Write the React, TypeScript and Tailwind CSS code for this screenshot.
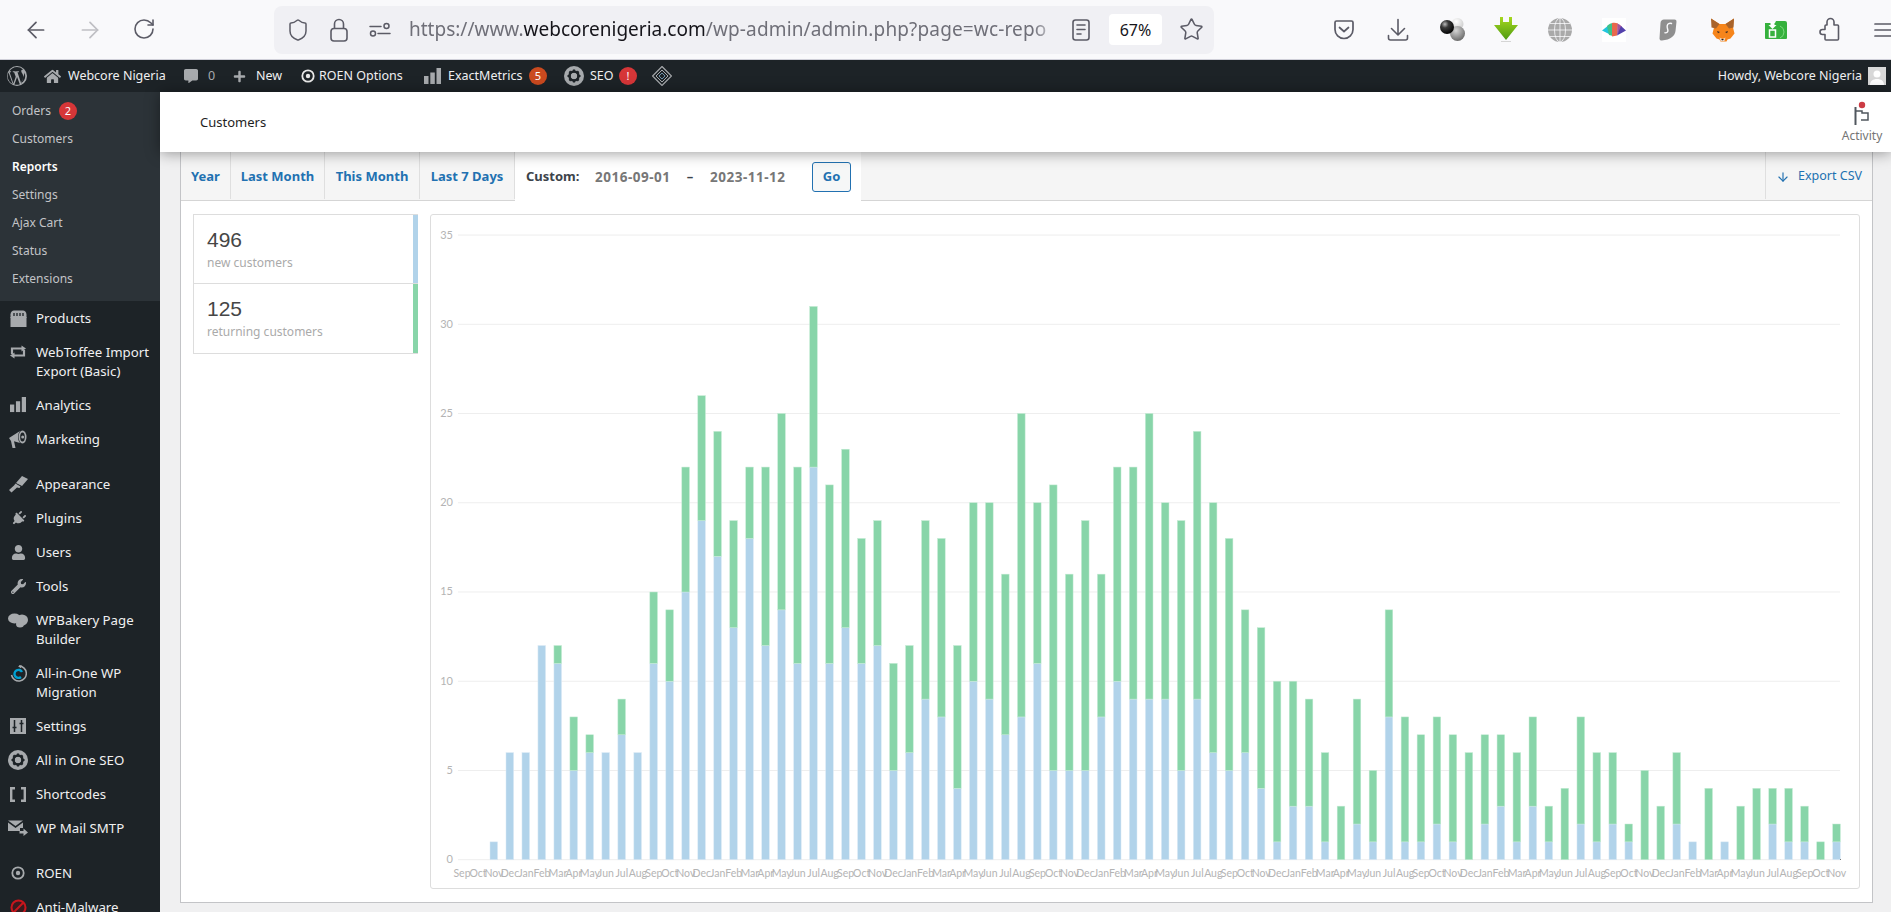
import { ArrowLeft, ArrowRight, RotateCw, Shield, Star, ArrowDown } from "lucide-react";
import { FaPlug, FaUser, FaWrench, FaHome, FaPlus, FaCommentAlt } from "react-icons/fa";
import type { ReactNode } from "react";

const series: [number, number][] = [
  [0, 0], [0, 0], [1, 1], [6, 6], [6, 6], [12, 12], [11, 12], [5, 8], [6, 7], [6, 6], [7, 9], [6, 6],
  [11, 15], [10, 14], [15, 22], [19, 26], [17, 24], [13, 19], [18, 22], [12, 22], [14, 25], [11, 22],
  [22, 31], [11, 21], [13, 23], [11, 18], [12, 19], [5, 11], [6, 12], [9, 19], [8, 18], [4, 12], [10, 20],
  [9, 20], [7, 16], [8, 25], [11, 20], [5, 21], [5, 16], [5, 19], [8, 16], [10, 22], [9, 22], [9, 25],
  [9, 20], [5, 19], [9, 24], [6, 20], [5, 18], [6, 14], [4, 13], [1, 10], [3, 10], [3, 9], [1, 6], [0, 3],
  [2, 9], [1, 5], [8, 14], [1, 8], [1, 7], [2, 8], [1, 7], [0, 6], [2, 7], [3, 7], [1, 6], [3, 8], [1, 3],
  [0, 4], [2, 8], [1, 6], [2, 6], [1, 2], [0, 5], [0, 3], [2, 6], [1, 1], [0, 4], [1, 1], [0, 3], [0, 4],
  [2, 4], [1, 4], [1, 3], [0, 1], [1, 2],
];
const months = ["Sep", "Oct", "Nov", "Dec", "Jan", "Feb", "Mar", "Apr", "May", "Jun", "Jul", "Aug"];

const Y0 = 859.7;
const UNIT = 17.847;

function Chart() {
  return (
    <svg viewBox="431 215 1428 673" className="block w-full h-full font-['Lato','Noto_Sans',sans-serif]">
      {[0, 5, 10, 15, 20, 25, 30, 35].map((v) => (
        <g key={v}>
          <rect x="458" y={Y0 - v * UNIT - 0.5} width="1382" height="1" fill="#eeeeee" />
          <text x="453" y={Y0 - v * UNIT + 3.5} textAnchor="end" fontSize="11" fill="#b4b4b4">
            {v}
          </text>
        </g>
      ))}
      {series.map(([fresh, total], i) => {
        const x = 490 + (i - 2) * 15.985;
        return (
          <g key={i}>
            {fresh > 0 && (
              <rect x={x} y={Y0 - fresh * UNIT} width="7.6" height={fresh * UNIT} fill="#b1d3ea" stroke="#dbeaf5" strokeWidth="0.5" />
            )}
            {total > fresh && (
              <rect x={x} y={Y0 - total * UNIT} width="7.6" height={(total - fresh) * UNIT} fill="#88d5a9" stroke="#c4ebd4" strokeWidth="0.5" />
            )}
            <text x={462 + i * 15.985} y="876.5" textAnchor="middle" fontSize="10.5" fill="#b4b4b4">
              {months[i % 12]}
            </text>
          </g>
        );
      })}
      <rect x="1840" y="859" width="1" height="1" fill="#777777" />
    </svg>
  );
}

/* ---- browser toolbar icons ---- */

function LockIcon() {
  return (
    <svg width="18" height="24" viewBox="0 0 18 24" fill="none" stroke="#5b5b66" strokeWidth="1.6">
      <rect x="1" y="10.500" width="16" height="12.500" rx="3" />
      <path d="M4.500 10.500V6a4.500 4.500 0 0 1 9 0v4.500" />
    </svg>
  );
}

function Permissions() {
  return (
    <svg width="22" height="22" viewBox="0 0 22 22" fill="none" stroke="#5b5b66" strokeWidth="1.5" strokeLinecap="round">
      <path d="M1 7.500h11" />
      <circle cx="17.500" cy="7" r="2.500" />
      <circle cx="4" cy="14.500" r="2.500" />
      <path d="M9 14.500h12" />
    </svg>
  );
}

function Reader() {
  return (
    <svg width="20" height="22" viewBox="0 0 20 22" fill="none" stroke="#5b5b66" strokeWidth="1.6" strokeLinecap="round">
      <rect x="2" y="1" width="16" height="20" rx="2.500" />
      <path d="M6 6h8M6 10.500h8M6 15h4" />
    </svg>
  );
}

function Pocket() {
  return (
    <svg width="22" height="22" viewBox="0 0 22 22" fill="none" stroke="#5b5b66" strokeWidth="1.7" strokeLinecap="round" strokeLinejoin="round">
      <path d="M2 3.500a1.500 1.500 0 0 1 1.500-1.500h15a1.500 1.500 0 0 1 1.500 1.500v7a9 9 0 0 1-18 0z" />
      <path d="M6.500 8.500l4.500 4 4.500-4" />
    </svg>
  );
}

function Download() {
  return (
    <svg width="22" height="24" viewBox="0 0 22 24" fill="none" stroke="#5b5b66" strokeWidth="1.6" strokeLinecap="round" strokeLinejoin="round">
      <path d="M11 1.500v15M4.500 10.500l6.500 6.500 6.500-6.500" />
      <path d="M1.500 17.500v2.500a2 2 0 0 0 2 2h15a2 2 0 0 0 2-2v-2.500" />
    </svg>
  );
}

function Balls() {
  return (
    <svg width="25" height="23" viewBox="0 0 25 23">
      <defs>
        <radialGradient id="ballA" cx="0.35" cy="0.3" r="0.75">
          <stop offset="0" stopColor="#bbbbbb" />
          <stop offset="0.35" stopColor="#3a3a3a" />
          <stop offset="1" stopColor="#000000" />
        </radialGradient>
        <radialGradient id="ballB" cx="0.4" cy="0.3" r="0.8">
          <stop offset="0" stopColor="#d5d5d5" />
          <stop offset="1" stopColor="#5d5d5d" />
        </radialGradient>
        <radialGradient id="ballC" cx="0.4" cy="0.3" r="0.8">
          <stop offset="0" stopColor="#ffffff" />
          <stop offset="1" stopColor="#c5c5c5" />
        </radialGradient>
      </defs>
      <circle cx="17.500" cy="6" r="6" fill="url(#ballC)" />
      <circle cx="17.500" cy="15.500" r="7.500" fill="url(#ballB)" />
      <circle cx="7" cy="9" r="7" fill="url(#ballA)" />
    </svg>
  );
}

function GreenArrow() {
  return (
    <svg width="26" height="26" viewBox="0 0 26 26">
      <defs>
        <linearGradient id="greenArrow" x1="0" y1="0" x2="0" y2="1">
          <stop offset="0" stopColor="#a6d81e" />
          <stop offset="1" stopColor="#4e9a12" />
        </linearGradient>
      </defs>
      <path d="M7 0h3v5h6V0h3v8h6L13 23 1 8h6z" fill="url(#greenArrow)" />
      <rect x="8" y="24" width="10" height="1" fill="#d5d5d5" />
    </svg>
  );
}

function Globe() {
  return (
    <svg width="24" height="24" viewBox="0 0 24 24" fill="none" stroke="#f9f9fb" strokeWidth="0.8">
      <circle cx="12" cy="12" r="12" fill="#a9a9a9" stroke="none" />
      <ellipse cx="12" cy="12" rx="5.500" ry="12" />
      <path d="M12 0v24M0 12h24M2 5.500h20M2 18.500h20" />
    </svg>
  );
}

function Rainbow() {
  return (
    <svg width="24" height="24" viewBox="0 0 24 24">
      <rect width="24" height="24" fill="#ffffff" />
      <path d="M0 12.500l7-5.500 2 10z" fill="#22c6de" />
      <path d="M5 8c2-2 4-2.800 6-3v13l-4-1z" fill="#3fc28a" />
      <path d="M10 5c2-.5 4-.3 6 .5l-1 12-5 1z" fill="#e8684c" />
      <path d="M15.500 5.500c2 .8 3.500 2 4.500 3.500l-5 8.500z" fill="#a6559a" />
      <path d="M19 8l5 4.500-9 5z" fill="#5340ac" />
    </svg>
  );
}

function Surfshark() {
  return (
    <svg width="18" height="22" viewBox="0 0 18 22">
      <path d="M5 0.500h10.500a2 2 0 0 1 2 2.200l-1 9.300c-.6 5-5 8.800-13.500 9.500-1.500.1-2.500-.6-2.500-2L1.500 4c.2-2 1.500-3.500 3.500-3.500z" fill="#8f8f8f" />
      <path d="M12.500 4.500c-2-.5-4 0-4.300 2.300-.3 2 .6 3 .7 4.700.1 1.500-1 2.500-2.900 2.300" fill="none" stroke="#f9f9fb" strokeWidth="1.400" strokeLinecap="round" />
    </svg>
  );
}

function Fox() {
  return (
    <svg width="25" height="24" viewBox="0 0 24 24">
      <path d="M0.500 0.500l8.500 5.500h6l8.500-5.500-1 9 1.500 6-4 5-3 1-1 2h-6l-1-2-3-1-4-5 1.500-6z" fill="#f6851b" />
      <path d="M0.500 0.500l8.500 5.500-3.500 4.500-4.500-1zM23.500 0.500l-8.500 5.500 3.500 4.500 4.500-1z" fill="#a9632a" />
      <path d="M9 19.500l1 3.500h4l1-3.500-3 1.500z" fill="#e8d6c8" />
      <path d="M10.500 21h3l-1.500 1.500z" fill="#222222" />
      <path d="M6.500 13l3 1-2 1.200zM17.500 13l-3 1 2 1.200z" fill="#3b2c25" />
    </svg>
  );
}

function GreenFolder() {
  return (
    <svg width="24" height="20" viewBox="0 0 24 20">
      <path d="M1 3h10l1-2h9a2 2 0 0 1 2 2v15a1 1 0 0 1-1 1H2a1 1 0 0 1-1-1z" fill="#36b13d" />
      <path d="M16 6a6.500 6.500 0 0 1 0 12" fill="none" stroke="#7ed97f" strokeWidth="1" />
      <path d="M6.500 2h4v3h2l-4 4-4-4h2z" fill="#ffffff" />
      <rect x="5.500" y="10" width="6" height="7" fill="none" stroke="#ffffff" strokeWidth="1.500" />
    </svg>
  );
}

function PuzzleIcon() {
  return (
    <svg width="24" height="25" viewBox="0 0 24 25" fill="none" stroke="#5b5b66" strokeWidth="1.600" strokeLinejoin="round">
      <path d="M9 8V5a3.500 3.500 0 0 1 7 0v3h3.500a1 1 0 0 1 1 1v13a1 1 0 0 1-1 1H8a1 1 0 0 1-1-1v-4.500H4.500a2.500 2.500 0 0 1 0-5H7V9a1 1 0 0 1 1-1z" />
    </svg>
  );
}

function Hamburger() {
  return (
    <svg width="20" height="18" viewBox="0 0 20 18" fill="none" stroke="#5b5b66" strokeWidth="1.700" strokeLinecap="round">
      <path d="M1 3h18M1 9h18M1 15h18" />
    </svg>
  );
}

/* ---- wp icons ---- */

function WpLogo() {
  return (
    <svg width="20" height="20" viewBox="0 0 20 20" fill="#a7aaad">
      <path d="M10 0a10 10 0 1 0 0 20 10 10 0 0 0 0-20zm0 1a9 9 0 0 1 6.100 2.400c-1-.1-1.900.7-1.900 1.700 0 .9.500 1.600 1.100 2.500.4.700.9 1.600.9 3 0 .9-.3 2-.8 3.500l-1.100 3.600-3.800-11.400c.6 0 1.200-.1 1.200-.1.600-.1.500-.9-.1-.9 0 0-1.700.1-2.800.1-1 0-2.700-.1-2.700-.1-.6 0-.6.900-.1.900 0 0 .5.1 1.100.1l1.600 4.500-2.300 6.800-3.800-11.300c.6 0 1.200-.1 1.200-.1.600-.1.500-.9-.1-.9 0 0-1.700.1-2.800.1H2.400A9 9 0 0 1 10 1zM1.500 6.400l4.300 11.800A9 9 0 0 1 1.500 6.400zm8.600 4.500l2.700 7.300.1.100a9 9 0 0 1-5.500.2zm7.500-4.100a9 9 0 0 1-3.400 10.300l2.700-7.900c.5-1.300.7-2.300.7-3.200 0-.4 0-.8 0-1.200z" />
    </svg>
  );
}

function SeoGear({ size }: { size: number }) {
  return (
    <svg width={size} height={size} viewBox="0 0 20 20">
      <circle cx="10" cy="10" r="10" fill="#a7aaad" />
      <circle cx="10" cy="10" r="4.500" fill="none" stroke="#1d2327" strokeWidth="2.600" />
      <path d="M10 3.500v3M10 13.500v3M3.500 10h3M13.500 10h3M5.400 5.400l2.100 2.100M12.500 12.500l2.100 2.100M14.600 5.400l-2.100 2.100M7.500 12.500l-2.100 2.100" stroke="#1d2327" strokeWidth="2.200" />
    </svg>
  );
}

function Bars({ size }: { size: number }) {
  return (
    <svg width={size} height={size} viewBox="0 0 17 17" fill="#a7aaad">
      <rect x="0" y="8" width="4.500" height="8" />
      <rect x="6.300" y="4.500" width="4.500" height="11.500" />
      <rect x="12.500" y="0" width="4.500" height="16" />
    </svg>
  );
}

function Diamond() {
  return (
    <svg width="20" height="20" viewBox="0 0 20 20" fill="none" stroke="#a7aaad">
      <path d="M10 0.500L19.500 10 10 19.500 0.500 10z" strokeWidth="1.200" />
      <path d="M10 4l6 6-6 6-6-6z" strokeWidth="1" />
      <path d="M10 7l3 3-3 3-3-3z" strokeWidth="1" stroke="#6b8fa8" />
    </svg>
  );
}

function ProductsIcon() {
  return (
    <svg width="17" height="17" viewBox="0 0 17 17" fill="#a7aaad">
      <path d="M0.500 8V4.500C0.500 2 2.500 0.500 4 0.500h9c1.500 0 3.500 1.500 3.500 4V8z" />
      <rect x="0.500" y="7" width="16" height="10" />
      <path d="M4 3v3M7 3v3M10 3v3M13 3v3" stroke="#1d2327" strokeWidth="1.300" />
    </svg>
  );
}

function RepeatIcon() {
  return (
    <svg width="16" height="14" viewBox="0 0 16 14" fill="#a7aaad">
      <path d="M2 9V3.500h10.500M14 5v5.500H4" fill="none" stroke="#a7aaad" strokeWidth="2.200" />
      <path d="M11.500 0.500L16 3.500l-4.500 3zM4.500 7.500L0 10.500l4.500 3z" />
    </svg>
  );
}

function Megaphone() {
  return (
    <svg width="18" height="19" viewBox="0 0 18 19" fill="#a7aaad">
      <path d="M0 8l11-7c-1.500 2-2 4-2 6s.5 4 2 6L5 11.300 6.500 18H3.500L2 11z" />
      <ellipse cx="13.500" cy="7" rx="4" ry="6.500" />
      <ellipse cx="13.500" cy="7" rx="2.300" ry="4.500" fill="#1d2327" />
      <circle cx="13.700" cy="7" r="1.500" />
    </svg>
  );
}

function Brush() {
  return (
    <svg width="19" height="17" viewBox="0 0 19 17" fill="#a7aaad">
      <path d="M7 7l6-7 6 3-6 7z" />
      <path d="M6.500 7.500l5 3-1 1.500-2.500-.5L2.500 16.500 0 14l5-4.500z" />
    </svg>
  );
}

function Bakery() {
  return (
    <svg width="20" height="16" viewBox="0 0 20 16" fill="#a7aaad">
      <ellipse cx="6.500" cy="6.500" rx="6.500" ry="5" />
      <ellipse cx="14" cy="8" rx="6" ry="5.500" />
      <ellipse cx="12" cy="12" rx="4" ry="3.500" />
    </svg>
  );
}

function MigrationIcon() {
  return (
    <svg width="17" height="19" viewBox="0 0 17 19" fill="none">
      <path d="M9 2a7.500 7.500 0 1 1-7.500 9" stroke="#a7aaad" strokeWidth="1.500" />
      <path d="M11.500 1L8 2.300l3 2z" fill="#a7aaad" />
      <path d="M12 8a4 4 0 1 0-1 5" stroke="#00a0d2" strokeWidth="2.400" />
    </svg>
  );
}

function SettingsIcon() {
  return (
    <svg width="16" height="16" viewBox="0 0 16 16">
      <rect width="16" height="16" fill="#a7aaad" />
      <path d="M4.500 2v12M11.500 2v12M2.500 9.500h4M9.500 5.500h4" stroke="#1d2327" strokeWidth="1.500" />
    </svg>
  );
}

function Brackets() {
  return (
    <svg width="16" height="15" viewBox="0 0 16 15" fill="none" stroke="#a7aaad" strokeWidth="2.400">
      <path d="M5 1.200H1.200v12.600H5M11 1.200h3.800v12.600H11" />
    </svg>
  );
}

function MailIcon() {
  return (
    <svg width="20" height="16" viewBox="0 0 20 16" fill="#a7aaad">
      <path d="M0 0.500h15L7.500 6zM0 2.500l7.500 5.500L15 2.500v5.500h-3v3H0z" />
      <path d="M11.500 11h4V8.500l4.500 4-4.500 3.500v-2.500h-4z" />
    </svg>
  );
}

function TargetIcon({ size, color }: { size: number; color: string }) {
  return (
    <svg width={size} height={size} viewBox="0 0 14 14" fill="none">
      <circle cx="7" cy="7" r="5.700" stroke={color} strokeWidth="1.800" />
      <circle cx="7" cy="7" r="2.200" fill={color} />
    </svg>
  );
}

function MalwareIcon() {
  return (
    <svg width="17" height="17" viewBox="0 0 17 17" fill="none">
      <circle cx="8.500" cy="8.500" r="8" fill="#3a1b1f" />
      <circle cx="8.500" cy="8.500" r="7" stroke="#c8161d" strokeWidth="2" />
      <path d="M3.500 13.500l10-10" stroke="#c8161d" strokeWidth="2" />
    </svg>
  );
}

function Flag() {
  return (
    <svg width="18" height="24" viewBox="0 0 18 24" fill="none">
      <path d="M2.500 6v18" stroke="#50575e" strokeWidth="2" />
      <path d="M3 10h6v2h6v7H8" stroke="#50575e" strokeWidth="1.500" />
      <circle cx="9" cy="4" r="3.200" fill="#cc3b44" />
    </svg>
  );
}

const submenu = [
  { label: "Orders", count: "2" },
  { label: "Customers" },
  { label: "Reports", current: true },
  { label: "Settings" },
  { label: "Ajax Cart" },
  { label: "Status" },
  { label: "Extensions" },
];

type MenuEntry = { icon: ReactNode; lines: string[]; spaced?: boolean };

const menu: MenuEntry[] = [
  { icon: <ProductsIcon />, lines: ["Products"] },
  { icon: <RepeatIcon />, lines: ["WebToffee Import", "Export (Basic)"] },
  { icon: <Bars size={16} />, lines: ["Analytics"] },
  { icon: <Megaphone />, lines: ["Marketing"] },
  { icon: <Brush />, lines: ["Appearance"], spaced: true },
  { icon: <FaPlug size={15} color="#a7aaad" className="rotate-45" />, lines: ["Plugins"] },
  { icon: <FaUser size={15} color="#a7aaad" />, lines: ["Users"] },
  { icon: <FaWrench size={15} color="#a7aaad" />, lines: ["Tools"] },
  { icon: <Bakery />, lines: ["WPBakery Page", "Builder"] },
  { icon: <MigrationIcon />, lines: ["All-in-One WP", "Migration"] },
  { icon: <SettingsIcon />, lines: ["Settings"] },
  { icon: <SeoGear size={20} />, lines: ["All in One SEO"] },
  { icon: <Brackets />, lines: ["Shortcodes"] },
  { icon: <MailIcon />, lines: ["WP Mail SMTP"] },
  { icon: <TargetIcon size={14} color="#a7aaad" />, lines: ["ROEN"], spaced: true },
  { icon: <MalwareIcon />, lines: ["Anti-Malware"] },
];

function Sidebar() {
  return (
    <aside className="w-[160px] shrink-0 bg-[#1d2327]">
      <ul className="bg-[#2c3338] pt-[5px] pb-[7px] h-[209px]">
        {submenu.map((s) => (
          <li
            key={s.label}
            className={`h-7 pl-3 flex items-center text-[12px] ${s.current ? "text-white font-semibold" : "text-[#c3c4c7]"}`}
          >
            {s.label}
            {s.count && (
              <span className="ml-2 w-[18px] h-[18px] rounded-full bg-[#d63638] text-white text-[11px] flex items-center justify-center">
                {s.count}
              </span>
            )}
          </li>
        ))}
      </ul>
      <ul>
        {menu.map((m) => (
          <li
            key={m.lines[0]}
            className={`flex text-[13.250px] leading-[19px] text-[#f0f0f1] ${m.spaced ? "mt-[11px]" : ""}`}
          >
            <span className="w-[36px] h-[34px] shrink-0 flex items-center justify-center">{m.icon}</span>
            <span className="py-[7.500px] whitespace-nowrap">
              {m.lines.map((l) => (
                <span key={l} className="block">
                  {l}
                </span>
              ))}
            </span>
          </li>
        ))}
      </ul>
    </aside>
  );
}

function AdminBar() {
  return (
    <header className="h-8 bg-[#1d2327] flex items-center text-[12.500px] text-[#f0f0f1] shrink-0">
      <span className="w-[34px] flex justify-center"><WpLogo /></span>
      <span className="w-[36px] flex justify-center"><FaHome size={17} color="#a7aaad" /></span>
      <span className="w-[100px] whitespace-nowrap -ml-[2px]">Webcore Nigeria</span>
      <span className="w-[16px] ml-[15px] flex justify-center"><FaCommentAlt size={14} color="#a7aaad" /></span>
      <span className="ml-[9px] text-[#a7aaad] w-[24px]">0</span>
      <span className="w-[16px] flex justify-center -ml-[1px]"><FaPlus size={13} color="#a7aaad" /></span>
      <span className="ml-[9px] w-[30px]">New</span>
      <span className="ml-[15px] w-[14px] flex justify-center"><TargetIcon size={14} color="#e8e8e8" /></span>
      <span className="ml-[4px] w-[90px] whitespace-nowrap">ROEN Options</span>
      <span className="ml-[15px] w-[17px]"><Bars size={17} /></span>
      <span className="ml-[7px] w-[75px] whitespace-nowrap">ExactMetrics</span>
      <span className="ml-[6px] w-[18px] h-[18px] rounded-full bg-[#ca4a1f] text-white text-[11px] flex items-center justify-center">5</span>
      <span className="ml-[17px]"><SeoGear size={20} /></span>
      <span className="ml-[6px] w-[24px]">SEO</span>
      <span className="ml-[5px] w-[18px] h-[18px] rounded-full bg-[#d63638] text-white text-[11px] flex items-center justify-center">!</span>
      <span className="ml-[15px]"><Diamond /></span>
      <span className="ml-auto whitespace-nowrap">Howdy, Webcore Nigeria</span>
      <span className="ml-[6px] mr-[5px] w-[18px] h-[18px] bg-[#d8d8d8] flex items-end justify-center overflow-hidden">
        <svg width="14" height="16" viewBox="0 0 14 16" fill="#ffffff">
          <circle cx="7" cy="5" r="3.500" />
          <path d="M0 16c0-4 3-6 7-6s7 2 7 6z" />
        </svg>
      </span>
    </header>
  );
}

function BrowserBar() {
  const right = [<Pocket key="a" />, <Download key="b" />, <Balls key="c" />, <GreenArrow key="d" />, <Globe key="e" />, <Rainbow key="f" />, <Surfshark key="g" />, <Fox key="h" />, <GreenFolder key="i" />, <PuzzleIcon key="j" />, <Hamburger key="k" />];
  return (
    <nav className="h-[60px] shrink-0 bg-[#f9f9fb] border-b border-[#cfcfd8] flex items-center pl-[18px] overflow-hidden">
      <div className="flex gap-[18px]">
        <span className="w-[36px] flex justify-center"><ArrowLeft size={26} color="#5b5b66" strokeWidth={1.6} /></span>
        <span className="w-[36px] flex justify-center"><ArrowRight size={26} color="#bfbfc4" strokeWidth={1.6} /></span>
        <span className="w-[36px] flex justify-center"><RotateCw size={24} color="#5b5b66" strokeWidth={1.6} /></span>
      </div>
      <div className="ml-[112px] w-[940px] h-12 rounded-lg bg-[#f0f0f4] flex items-center pl-[12px] pr-[10px] shrink-0">
        <Shield size={24} color="#5b5b66" strokeWidth={1.5} />
        <span className="ml-[20px]"><LockIcon /></span>
        <span className="ml-[21px]"><Permissions /></span>
        <span className="ml-[18px] w-[650px] shrink-0 overflow-hidden whitespace-nowrap text-[19px] text-[#6f6f78] [mask-image:linear-gradient(to_right,black_96%,transparent)]">
          https://www.<span className="text-[#15141a]">webcorenigeria.com</span>
          <span className="tracking-[0.15px]">/wp-admin/admin.php?page=wc-repo</span>
        </span>
        <span className="ml-[12px]"><Reader /></span>
        <span className="ml-[18px] w-[53px] h-[31px] rounded bg-white flex items-center justify-center text-[16px] text-[#15141a]">67%</span>
        <span className="ml-[17px]"><Star size={25} color="#5b5b66" strokeWidth={1.5} /></span>
      </div>
      <div className="ml-[103px] flex shrink-0">
        {right.map((icon, i) => (
          <span key={i} className="w-[54px] flex justify-center items-center">{icon}</span>
        ))}
      </div>
    </nav>
  );
}

function ReportTabs() {
  return (
    <div className="h-[49px] bg-[#f5f5f5] border-b border-[#d5d5d5] flex shrink-0 text-[13px] font-bold">
      {[
        { label: "Year", w: "w-[50px]" },
        { label: "Last Month", w: "w-[94px]" },
        { label: "This Month", w: "w-[95px]" },
        { label: "Last 7 Days", w: "w-[95px]" },
      ].map((t) => (
        <span key={t.label} className={`${t.w} h-[47px] pt-[2px] border-r border-[#dfdfdf] flex items-center justify-center text-[#2271b1] whitespace-nowrap`}>
          {t.label}
        </span>
      ))}
      <div className="w-[346px] h-[50px] bg-white flex items-center pl-[11px] whitespace-nowrap">
        <span className="w-[69px] text-[#3c434a]">Custom:</span>
        <span className="w-[75px] text-[#777777] text-[13.500px] tracking-[0.5px]">2016-09-01</span>
        <span className="w-[40px] text-center text-[#3c434a]">–</span>
        <span className="w-[76px] text-[#777777] text-[13.500px] tracking-[0.5px]">2023-11-12</span>
        <span className="ml-[26px] w-[39px] h-[30px] rounded-[3px] border border-[#2271b1] bg-[#f6f7f7] text-[#2271b1] flex items-center justify-center">Go</span>
      </div>
      <div className="ml-auto w-[107px] h-[47px] pt-[2px] border-l border-[#dfdfdf] flex items-center pl-[10px] font-normal text-[12.500px] text-[#2271b1] whitespace-nowrap">
        <ArrowDown size={14} strokeWidth={2} />
        <span className="ml-[8px]">Export CSV</span>
      </div>
    </div>
  );
}

function Stat({ value, label, color, h }: { value: string; label: string; color: string; h: string }) {
  return (
    <div className={`${h} flex justify-between`}>
      <div className="pl-[13px] pt-[12px]">
        <div className="font-['Liberation_Sans',Arial,sans-serif] text-[21px] leading-[26px] text-[#464646]">{value}</div>
        <div className="text-[12px] leading-[20px] text-[#aaaaaa]">{label}</div>
      </div>
      <div className={`w-[5px] ${color}`} />
    </div>
  );
}

export default function App() {
  return (
    <div className="w-full h-screen overflow-hidden flex flex-col bg-[#f0f0f1] font-['Noto_Sans','Open_Sans',sans-serif]">
      <BrowserBar />
      <AdminBar />
      <div className="flex flex-1 min-h-0">
        <Sidebar />
        <main className="flex-1 min-w-0 flex flex-col">
          <div className="h-[60px] shrink-0 bg-white relative z-10 shadow-[0_1px_14px_rgba(0,0,0,0.4)] flex items-center pl-[40px] pr-[9px] justify-between">
            <span className="text-[13px] text-[#1e1e1e] pt-[2px]">Customers</span>
            <span className="flex flex-col items-center w-[40px]">
              <Flag />
              <span className="text-[12px] leading-[16px] text-[#757575] mt-[3px]">Activity</span>
            </span>
          </div>
          <div className="ml-[20px] mr-[18px] mb-[10px] flex-1 flex flex-col bg-white border-x border-b border-[#c3c4c7]">
            <ReportTabs />
            <div className="flex-1 flex pt-[13px] pl-[12px] pb-[13px] pr-[12px]">
              <div className="w-[225px] h-[140px] border border-r-0 border-[#dddddd] shrink-0">
                <Stat value="496" label="new customers" color="bg-[#b1d3ea]" h="h-[68px]" />
                <div className="h-px bg-[#dddddd]" />
                <Stat value="125" label="returning customers" color="bg-[#88d5a9]" h="h-[69px]" />
              </div>
              <div className="ml-[12px] flex-1 border border-[#dddddd] rounded-[3px] min-w-0">
                <Chart />
              </div>
            </div>
          </div>
        </main>
      </div>
    </div>
  );
}
